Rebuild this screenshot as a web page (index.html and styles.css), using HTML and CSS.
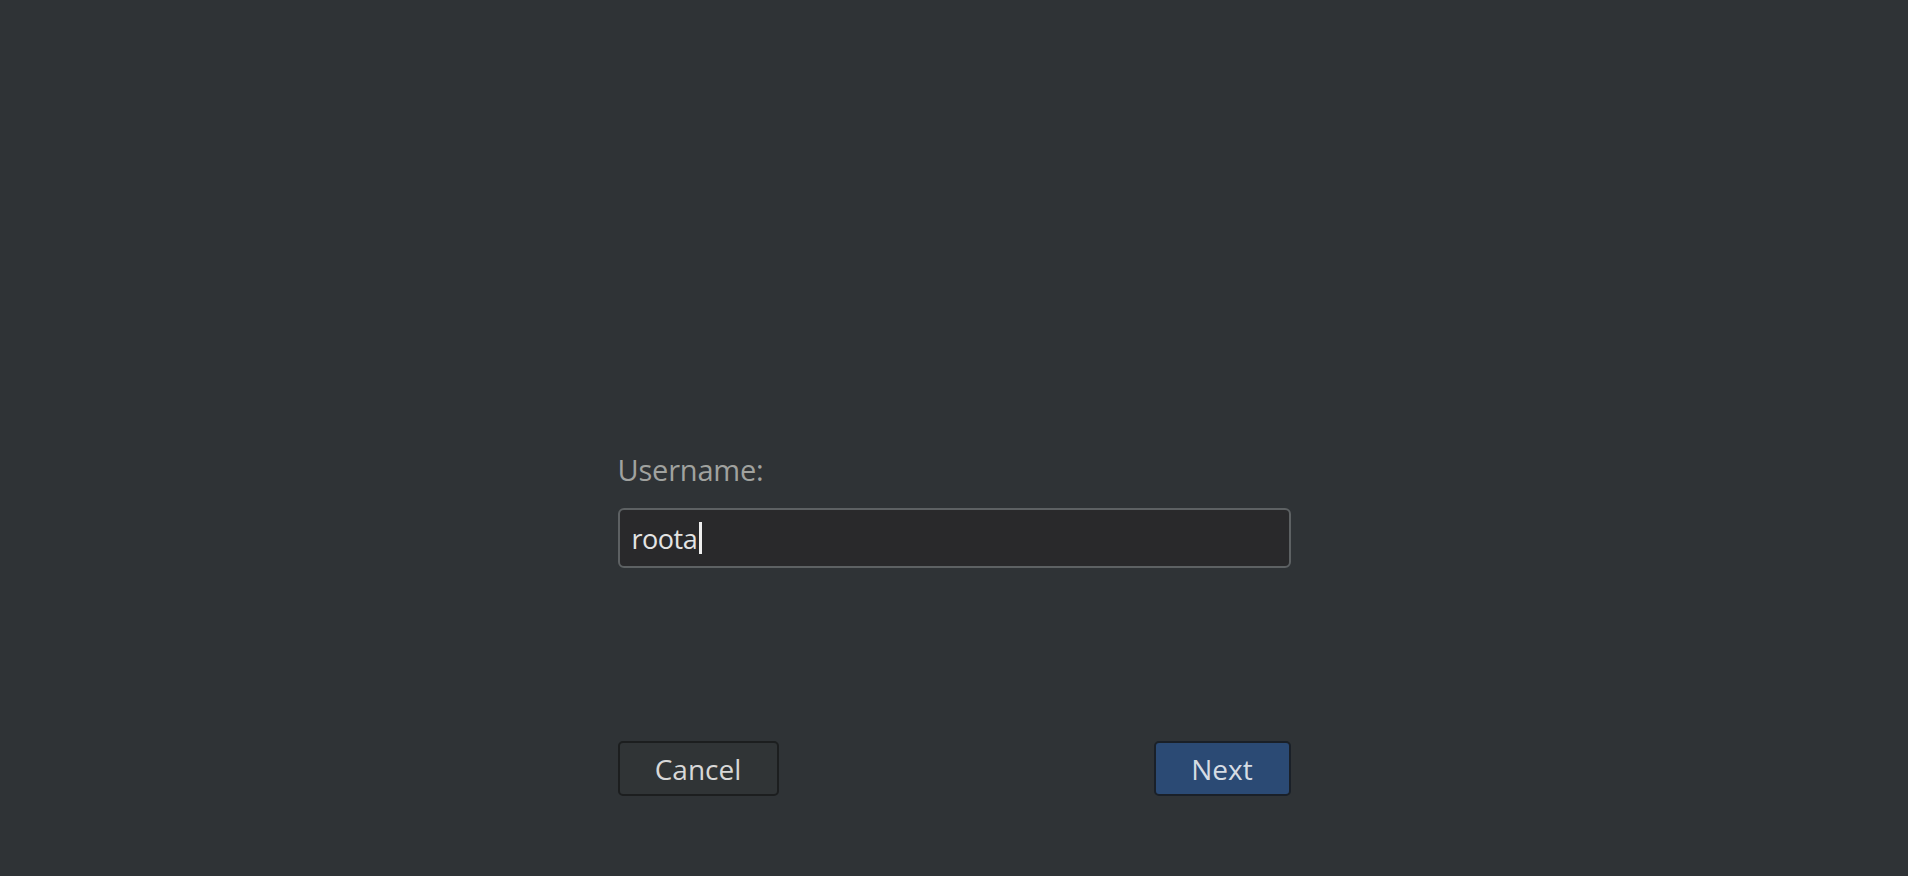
FILE: index.html
```html
<!DOCTYPE html>
<html lang="en">
<head>
  <meta charset="UTF-8" />
  <title>Login</title>
  <link rel="stylesheet" href="styles.css">
</head>
<body>
  <div class="login">
    <label class="prompt" for="username">Username:</label>
    <div class="entry" id="username">
      <span class="entry-text">roota</span><span class="cursor"></span>
    </div>
    <div class="buttons">
      <button class="btn">Cancel</button>
      <button class="btn btn-default">Next</button>
    </div>
  </div>
</body>
</html>
```

FILE: styles.css
```css
html, body {
  height: 100%;
}
body {
  margin: 0;
  background: #2f3336;
  font-family: 'Open Sans', 'Noto Sans', sans-serif;
  display: flex;
  justify-content: center;
  overflow: hidden;
}
.login {
  width: 673px;
  padding-top: 451px;
  display: flex;
  flex-direction: column;
}
.prompt {
  font-size: 29px;
  line-height: 38px;
  color: #a0a29f;
  letter-spacing: -0.2px;
}
.entry {
  margin-top: 19px;
  height: 56px;
  border: 2px solid #5d6163;
  border-radius: 6px;
  background: #29292b;
  padding: 0 12px;
  display: flex;
  align-items: center;
}
.entry-text {
  font-size: 27px;
  color: #e4e4e4;
  letter-spacing: -0.5px;
}
.cursor {
  display: inline-block;
  width: 3px;
  height: 32px;
  margin-left: 2px;
  background: #eeeeee;
}
.buttons {
  margin-top: 173px;
  display: flex;
  justify-content: space-between;
}
.btn {
  height: 55px;
  width: 161px;
  border: 2px solid #1c1e1f;
  border-radius: 5px;
  background: #303436;
  color: #d8d8d8;
  font-family: 'Open Sans', 'Noto Sans', sans-serif;
  font-size: 28px;
  padding: 0;
  cursor: pointer;
}
.btn-default {
  width: 137px;
  background: #2b4a74;
  border-color: #1a2028;
  color: #d6dce4;
}
```
